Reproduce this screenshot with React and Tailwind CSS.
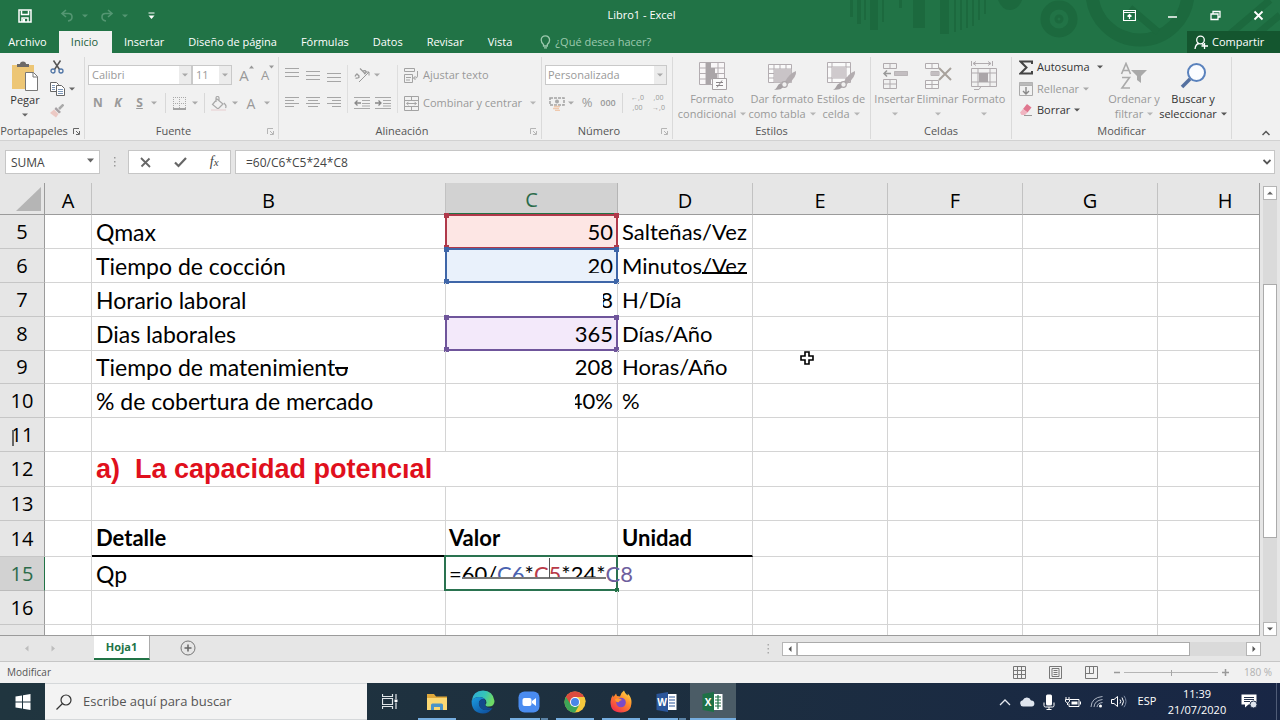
import React from "react";

const Caret = ({ className = "text-[#a9a9a9]" }) => (
  <svg width="6" height="4" viewBox="0 0 6 4" className={"shrink-0 " + className} aria-hidden="true">
    <path d="M0 0.500h6L3 3.500z" fill="currentColor" />
  </svg>
);

const Sep = () => <span className="h-5 w-px shrink-0 bg-[#d8d8d8]" />;

const Icon = ({ w = 16, h = 16, children, className = "" }) => (
  <svg width={w} height={h} viewBox={`0 0 ${w} ${h}`} fill="none" className={"shrink-0 " + className} aria-hidden="true">
    {children}
  </svg>
);

const Btn = ({ label, className = "", children }) => (
  <button type="button" aria-label={label} className={"flex shrink-0 items-center justify-center " + className}>
    {children}
  </button>
);

/* ---------- Title bar ---------- */

function TitleBar() {
  return (
    <header className="relative bg-[#217346] text-white">
      <svg className="absolute right-0 top-0" width="440" height="53" viewBox="0 0 440 53" aria-hidden="true">
        <g fill="#1c693e">
          <path d="M10 0h3v17h-3zM17 0h4v24h-4zM24 0h2v20h-2zM30 0h8v30h-8zM42 0h2v22h-2zM59 0h3v8h-3zM73 0h12v28h-12zM100 0h9v34h-9zM114 0h2v32h-2zM120 0h2v30h-2zM126 0h2v28h-2zM132 0h2v26h-2zM138 0h2v20h-2zM144 0h2v14h-2zM158 0h24q-4 10-12 10t-12-10z" />
        </g>
        <g fill="none" stroke="#1c693e">
          <circle cx="219" cy="19" r="14" strokeWidth="9" />
          <circle cx="219" cy="19" r="3" strokeWidth="3" />
          <circle cx="300" cy="-8" r="48" strokeWidth="13" />
          <path d="M290 8l28 24M390 34l40-34M410 40l30-25" strokeWidth="7" />
        </g>
      </svg>
      <div className="relative flex h-[31px] items-center">
        <div className="flex flex-1 items-center pl-[18px]">
          <Btn label="Guardar">
            <Icon w={14} h={14}>
              <path d="M1 1h12v12H1z" stroke="#fff" strokeWidth="1.500" />
              <path d="M3.500 1.500v4h7v-4M4 13V9h6v4" stroke="#fff" strokeWidth="1.500" />
              <path d="M5 10h2v3H5z" fill="#fff" />
            </Icon>
          </Btn>
          <Btn label="Deshacer" className="ml-7 gap-2 text-[#549672]">
            <Icon w={14} h={14}>
              <path d="M6 1L2 4.500 6 8M2 4.500h6.500q3.500 0 3.500 3.500t-4 4" stroke="currentColor" strokeWidth="1.600" />
            </Icon>
            <Caret className="text-[#549672]" />
          </Btn>
          <Btn label="Rehacer" className="ml-3 gap-2 text-[#549672]">
            <Icon w={14} h={14}>
              <path d="M8 1l4 3.500L8 8M12 4.500H5.500Q2 4.500 2 8t4 4" stroke="currentColor" strokeWidth="1.600" />
            </Icon>
            <Caret className="text-[#549672]" />
          </Btn>
          <Btn label="Personalizar barra" className="ml-5">
            <Icon w={7} h={8}>
              <path d="M0.500 1h6" stroke="#fff" />
              <path d="M0.500 3.500h6L3.500 7z" fill="#fff" />
            </Icon>
          </Btn>
        </div>
        <h1 className="text-[11px] font-normal">Libro1 - Excel</h1>
        <div className="flex flex-1 items-center justify-end gap-[30px] pr-[15px]">
          <Btn label="Opciones de la cinta">
            <Icon w={13} h={11}>
              <path d="M0.500 0.500h12v10h-12zM0.500 2.500h12" stroke="#fff" strokeWidth="1.200" />
              <path d="M6.500 9V4.500M4.500 6.500l2-2 2 2" stroke="#fff" strokeWidth="1.200" />
            </Icon>
          </Btn>
          <Btn label="Minimizar">
            <Icon w={13} h={11}><path d="M2 7h9" stroke="#fff" strokeWidth="1.500" /></Icon>
          </Btn>
          <Btn label="Restaurar">
            <Icon w={13} h={11}>
              <path d="M2 4h7v5.500H2zM4 4V1.500h7V7H9" stroke="#fff" strokeWidth="1.300" />
            </Icon>
          </Btn>
          <Btn label="Cerrar">
            <Icon w={13} h={11}><path d="M2.500 1.500l8 8M10.500 1.500l-8 8" stroke="#fff" strokeWidth="1.800" /></Icon>
          </Btn>
        </div>
      </div>
      <nav className="relative flex h-[22px] items-stretch text-[11px]">
        <button type="button" className="w-[59px] pr-1 text-center">Archivo</button>
        <button type="button" className="w-[53px] bg-[#f1f1f1] pr-0.5 text-center text-[#1e5e3c]">Inicio</button>
        {["Insertar", "Diseño de página", "Fórmulas", "Datos", "Revisar", "Vista"].map((t) => (
          <button key={t} type="button" className="px-3">{t}</button>
        ))}
        <button type="button" className="ml-4 flex items-center gap-1 text-[#9cc9ae]">
          <Icon w={11} h={14}>
            <path d="M3.500 9.500Q1.200 7.500 1.200 5a4.200 4.200 0 0 1 8.400 0q0 2.500-2.300 4.500v1.500h-3.800zM4 12.800h3" stroke="currentColor" strokeWidth="1.300" />
          </Icon>
          ¿Qué desea hacer?
        </button>
        <button type="button" className="ml-auto flex w-[93px] items-center gap-1 bg-[#14562f] pl-[7px]">
          <Icon w={14} h={15}>
            <circle cx="6.500" cy="5" r="3.800" stroke="#fff" strokeWidth="1.300" />
            <path d="M1 14q0.500-5 4-5.500M8 8.500l1.500 1.500M10.500 8v6M7.500 11h6.500" stroke="#fff" strokeWidth="1.300" />
          </Icon>
          Compartir
        </button>
      </nav>
    </header>
  );
}

/* ---------- Ribbon ---------- */

const Launcher = ({ dark }) => (
  <Btn label="Más opciones" className={"w-4 " + (dark ? "text-[#666]" : "text-[#b5b5b5]")}>
    <Icon w={7} h={7}>
      <path d="M0.500 6V0.500H6M3 3l3 3M6.500 3v3.500H3" stroke="currentColor" />
    </Icon>
  </Btn>
);

const Group = ({ title, className, launcher, dark, children }) => (
  <section className={"flex shrink-0 flex-col " + className}>
    <div className="mt-1 flex h-[82px] flex-col border-r border-[#dadada]">
      <div className="h-[67px]">{children}</div>
      <div className="flex h-4 items-center text-[11px] text-[#555]">
        <h2 className="flex-1 whitespace-nowrap text-center font-normal">{title}</h2>
        {launcher && <Launcher dark={dark} />}
      </div>
    </div>
  </section>
);

const BigBtn = ({ lines, icon, className = "", active }) => (
  <button
    type="button"
    className={"flex shrink-0 flex-col items-center text-[11px] leading-[14px] " + (active ? "text-[#333] " : "text-[#999] ") + className}
  >
    <span className="flex h-8 items-center justify-center">{icon}</span>
    <span className="whitespace-nowrap">{lines[0]}</span>
    <span className="flex h-[15px] items-center gap-1 whitespace-nowrap">
      {lines[1]}
      <Caret className={active ? "text-[#555]" : "text-[#b5b5b5]"} />
    </span>
  </button>
);

const Lines = ({ y, widths = [14, 14, 14], align = "l", gap = 4 }) => (
  <Icon w={14} h={14}>
    {widths.map((w, i) => {
      const x = align === "l" ? 0 : align === "c" ? (14 - w) / 2 : 14 - w;
      return <path key={i} d={`M${x} ${y + i * gap + 0.5}h${w}`} stroke="#a6a6a6" />;
    })}
  </Icon>
);

const Brush = () => (
  <g>
    <path d="M29 9q1 6-8 13l-3-2.500Q23 11 29 9z" fill="#b3adb0" />
    <circle cx="17.500" cy="22.500" r="2.800" fill="#f1f1f1" stroke="#aaa5a8" strokeWidth="1.200" />
    <path d="M14 21q-3 1-4 4-1 2-3 2.500 6 1 9-2z" fill="#a5a0a3" />
  </g>
);

function Ribbon() {
  return (
    <div className="flex h-[88px] shrink-0 items-start overflow-hidden border-b border-[#d2d2d2] bg-[#f1f1f1] text-[11px] text-[#999]">
      <Group title="Portapapeles" launcher dark className="w-[85px]">
        <div className="flex pt-0.5">
          <button type="button" className="flex w-[50px] flex-col items-center pt-0.5 text-[#333]">
            <Icon w={28} h={30}>
              <path d="M1 4h22v24H1z" fill="#edc675" />
              <path d="M6 6V3h3q0-2.500 3-2.500t3 2.500h3v3z" fill="#6d6a68" />
              <path d="M14.500 11.500h8l4 4v14h-12z" fill="#fff" stroke="#777" />
              <path d="M22 11.500V16h4.500" stroke="#777" />
            </Icon>
            <span className="flex h-[18px] items-center">Pegar</span>
            <Caret className="mt-1 text-[#666]" />
          </button>
          <div className="flex flex-col items-start gap-2 pt-px">
            <Btn label="Cortar" className="h-3.5 w-3.5">
              <Icon w={14} h={14}>
                <path d="M3.500 0.500l6 9M10.500 0.500l-6 9" stroke="#555" strokeWidth="1.500" />
                <circle cx="3" cy="11" r="2" stroke="#4f74a5" strokeWidth="1.300" />
                <circle cx="11" cy="11" r="2" stroke="#4f74a5" strokeWidth="1.300" />
              </Icon>
            </Btn>
            <Btn label="Copiar" className="h-3.5 gap-1">
              <Icon w={15} h={14}>
                <path d="M0.500 0.500h6l2 2v7h-8z" fill="#fff" stroke="#666" />
                <path d="M2 3.500h3M2 5.500h3M2 7.500h3" stroke="#7b95b5" />
                <path d="M6.500 3.500h5l3 3v7h-8z" fill="#fff" stroke="#666" />
                <path d="M8 7.500h5M8 9.500h5M8 11.500h5" stroke="#7b95b5" />
              </Icon>
              <Caret className="text-[#666]" />
            </Btn>
            <Btn label="Copiar formato" className="h-3.5 w-3.5">
              <Icon w={14} h={14}>
                <path d="M13.500 0.500L9 5" stroke="#aaa" strokeWidth="2.500" />
                <path d="M6 3l5 5-2 1.500L4.500 5z" fill="#a5a0a3" />
                <path d="M4 5.500L8.500 10 6 13.500 0 9z" fill="#ecc9c4" />
              </Icon>
            </Btn>
          </div>
        </div>
      </Group>

      <Group title="Fuente" launcher className="w-[194px]">
        <div className="flex flex-col gap-2 pl-[3px] pt-2">
          <div className="flex h-5 items-center">
            <div className="relative">
              <select aria-label="Fuente" className="h-5 w-[104px] appearance-none border border-[#c9c9c9] bg-white px-[3px]">
                <option>Calibri</option>
              </select>
              <span className="pointer-events-none absolute inset-y-px right-px flex w-3 items-center justify-center bg-[#ececec]"><Caret /></span>
            </div>
            <div className="relative">
              <select aria-label="Tamaño de fuente" className="h-5 w-10 appearance-none border border-[#c9c9c9] bg-white px-[3px]">
                <option>11</option>
              </select>
              <span className="pointer-events-none absolute inset-y-px right-px flex w-3 items-center justify-center bg-[#ececec]"><Caret /></span>
            </div>
            <Btn label="Aumentar tamaño" className="ml-1 w-[21px] text-[15px] leading-5">
              A<Icon w={5} h={4} className="self-start"><path d="M0 3.500h5L2.500 0.500z" fill="#999" /></Icon>
            </Btn>
            <Btn label="Disminuir tamaño" className="w-[21px] text-[13px] leading-5">
              A<Icon w={5} h={4} className="self-start"><path d="M0 0.500h5L2.500 3.500z" fill="#999" /></Icon>
            </Btn>
          </div>
          <div className="flex h-5 items-center text-[12px]">
            <Btn label="Negrita" className="w-5 font-bold">N</Btn>
            <Btn label="Cursiva" className="w-5 font-bold italic">K</Btn>
            <Btn label="Subrayado" className="w-[23px] font-bold underline">S</Btn>
            <Caret />
            <span className="w-2" /><Sep />
            <Btn label="Bordes" className="w-[26px]">
              <Icon w={13} h={13}>
                <path d="M0.500 0v12M12.500 0v12M6.500 0v12M0 0.500h13M0 6.500h13" stroke="#aaa" strokeDasharray="1 1" />
                <path d="M0 12h13" stroke="#888" strokeWidth="1.500" />
              </Icon>
            </Btn>
            <Caret /><span className="w-1.5" /><Sep />
            <Btn label="Color de relleno" className="w-[27px]">
              <Icon w={16} h={15}>
                <path d="M6 3l6 5-5 5-5.500-4.500zM5 6V2q0-1.500 1.500-1.500T8 2v2.500M13 7q3 3 1.500 5" stroke="#a9a9a9" strokeWidth="1.200" />
                <path d="M0 13h15v2H0z" fill="#ecdfe0" />
              </Icon>
            </Btn>
            <Caret />
            <Btn label="Color de fuente" className="w-[26px] text-[14px]">A</Btn>
            <Caret />
          </div>
        </div>
      </Group>

      <Group title="Alineación" launcher className="w-[263px]">
        <div className="flex h-[60px] gap-1.5 pl-1.5 pt-2">
          <div className="grid h-12 grid-cols-3 grid-rows-2 gap-x-[7px] gap-y-2">
            <Btn label="Superior"><Lines y={0} /></Btn>
            <Btn label="Medio"><Lines y={3} /></Btn>
            <Btn label="Inferior"><Lines y={5} /></Btn>
            <Btn label="Izquierda"><Lines y={1} widths={[14, 9, 14, 9]} gap={3} /></Btn>
            <Btn label="Centro"><Lines y={1} widths={[14, 10, 14, 10]} align="c" gap={3} /></Btn>
            <Btn label="Derecha"><Lines y={1} widths={[14, 9, 14, 9]} align="r" gap={3} /></Btn>
          </div>
          <span className="h-12 w-px bg-[#dedede]" />
          <div className="flex flex-col gap-2">
            <Btn label="Orientación" className="h-5 gap-1 self-start">
              <Icon w={16} h={16}>
                <path d="M2.500 6.500l3 3M1 9.500q1-2.500 2.500-2t1.500 3q-2 1-3.500.5M6 1.500l5.500 5.500M8.500 4q3-1 3.500 0.500t-2 2.500" stroke="#999" strokeWidth="1.200" />
                <path d="M5 15l10-10M11.500 5H15v3.500" stroke="#999" />
              </Icon>
              <Caret />
            </Btn>
            <div className="flex h-5 items-center gap-[5px]">
              <Btn label="Disminuir sangría">
                <Icon w={16} h={12}>
                  <path d="M0 0.500h16M8 3.500h8M8 6.500h8M0 11.500h16M8 9h8" stroke="#a9a9a9" />
                  <path d="M7 6H1M3.500 3.500L1 6l2.500 2.500" stroke="#888" strokeWidth="1.300" />
                </Icon>
              </Btn>
              <Btn label="Aumentar sangría">
                <Icon w={16} h={12}>
                  <path d="M0 0.500h16M8 3.500h8M8 6.500h8M0 11.500h16M8 9h8" stroke="#a9a9a9" />
                  <path d="M0 6h6M3.500 3.500L6 6 3.500 8.500" stroke="#888" strokeWidth="1.300" />
                </Icon>
              </Btn>
            </div>
          </div>
          <span className="h-12 w-px bg-[#dedede]" />
          <div className="flex flex-col items-start gap-2">
            <button type="button" className="flex h-5 items-center gap-1">
              <Icon w={15} h={15}>
                <path d="M0.500 0.500h10v3h-10zM0.500 6.500h8v8h-8zM2 9.500h5M2 12h4M13.500 3v5q0 2-2 2h-2M11.500 8l-2 2 2 2" stroke="#a3a3a3" />
              </Icon>
              Ajustar texto
            </button>
            <button type="button" className="flex h-5 items-center gap-1 whitespace-nowrap">
              <Icon w={15} h={15}>
                <path d="M0.500 0.500h14v14h-14zM0.500 4.500h14M0.500 10.500h14M7.500 0.500v4M7.500 10.500v4M2.500 7.500h10M4.500 5.800L2.800 7.500l1.700 1.700M10.500 5.800l1.700 1.700-1.700 1.700" stroke="#a3a3a3" />
              </Icon>
              Combinar y centrar
              <Caret className="ml-1 text-[#b5b5b5]" />
            </button>
          </div>
        </div>
      </Group>

      <Group title="Número" launcher className="w-[131px]">
        <div className="flex flex-col gap-2 pl-[3px] pt-2">
          <div className="relative h-5 w-[122px]">
            <select aria-label="Formato de número" className="h-5 w-full appearance-none border border-[#c9c9c9] bg-white px-[2px]">
              <option>Personalizada</option>
            </select>
            <span className="pointer-events-none absolute inset-y-px right-px flex w-3 items-center justify-center bg-[#ececec]"><Caret /></span>
          </div>
          <div className="flex h-5 items-center">
            <Btn label="Formato de contabilidad" className="w-[23px]">
              <Icon w={16} h={15}>
                <path d="M1 2h14v7H1z" stroke="#a3a3a3" strokeWidth="1.500" strokeDasharray="3 1" />
                <circle cx="8" cy="5.500" r="2" fill="#a9a9a9" />
                <path d="M5 10.500h6M4 12.500h6M6 14.500h5" stroke="#efc9ae" strokeWidth="1.500" />
              </Icon>
            </Btn>
            <Caret />
            <Btn label="Porcentaje" className="w-[26px] text-[13px]">%</Btn>
            <Btn label="Estilo millares" className="w-4 text-[9px] font-semibold">000</Btn>
            <span className="w-1.5" /><Sep />
            <Btn label="Aumentar decimales" className="ml-1 w-[21px] text-[7px] leading-[10px]"><span>←,0<br />,00</span></Btn>
            <Btn label="Disminuir decimales" className="w-[21px] text-[7px] leading-[10px]"><span>,00<br />→,0</span></Btn>
          </div>
        </div>
      </Group>

      <Group title="Estilos" className="w-[198px]">
        <div className="flex pl-1 pt-[3px]">
          <BigBtn className="w-[70px]" lines={["Formato", "condicional"]} icon={
            <Icon w={29} h={30}>
              <path d="M1.500 1.500h25v22h-25zM8 1.500v22M20 1.500v22M1.500 7h25M1.500 12.500h25M1.500 18h25" stroke="#b3adb1" fill="#f9f7f8" />
              <path d="M8 1.500h5v5.500H8zM8 7h9v5.500H8zM8 12.500h11V18H8zM8 18h5v5.500H8z" fill="#aaa5a8" />
              <path d="M14.500 17.500h14v11h-14z" fill="#fafafa" stroke="#a5a0a3" />
              <path d="M18 21.500h7M18 24.500h7M24 19.500l-5 7" stroke="#8a8588" />
            </Icon>} />
          <BigBtn className="w-[70px]" lines={["Dar formato", "como tabla"]} icon={
            <Icon w={30} h={28}>
              <path d="M1.500 2.500h23v18h-23zM7 2.500v18M13 2.500v18M19 2.500v18M1.500 7h23M1.500 11.500h23M1.500 16h23" stroke="#b3adb1" fill="#fafafa" />
              <path d="M7 7h17.500v13.500H7z" fill="#c9c4c7" /><Brush />
            </Icon>} />
          <BigBtn className="w-12" lines={["Estilos de", "celda"]} icon={
            <Icon w={30} h={28}>
              <path d="M1.500 0.500h23v20h-23zM6 0.500v20M20 0.500v20M1.500 5h23M1.500 16h23" stroke="#b3adb1" fill="#fafafa" />
              <path d="M6 5h14v11H6z" fill="#cfcacd" /><Brush />
            </Icon>} />
        </div>
      </Group>

      <Group title="Celdas" className="w-[141px]">
        <div className="flex pl-0.5 pt-[3px]">
          <BigBtn className="w-[43px]" lines={["Insertar", ""]} icon={
            <Icon w={26} h={28}>
              <path d="M1.500 1.500h13v5h-13zM8 1.500v5M1.500 17.500h13v9h-13zM8 17.500v9M1.500 22h13M12.500 9.500h13v4h-13z" stroke="#b0abae" />
              <path d="M12.500 9.500h13v4h-13z" fill="#c3bec1" />
              <path d="M9 11.500H2M5 8.500l-3 3 3 3" stroke="#999" strokeWidth="1.500" />
            </Icon>} />
          <BigBtn className="w-[43px]" lines={["Eliminar", ""]} icon={
            <Icon w={28} h={28}>
              <path d="M1.500 1.500h13v5h-13zM8 1.500v5M1.500 18.500h13v8h-13zM8 18.500v8M1.500 22.500h13M7 9.500h8v4H7z" stroke="#b0abae" fill="#f6f6f6" />
              <path d="M7 9.500h8v4H7z" fill="#c3bec1" />
              <path d="M15 6l12 12M27 6L15 18" stroke="#a8a29c" strokeWidth="2" />
            </Icon>} />
          <BigBtn className="w-[49px]" lines={["Formato", ""]} icon={
            <Icon w={28} h={30}>
              <path d="M1.500 0v5M22.500 0v5M3 2.500h18M6 0.500L3 2.500l3 2M18 0.500l3 2-3 2M1.500 7.500h25v18h-25zM8 7.500v18M20 7.500v18M1.500 12h25M1.500 21h25M4 28.500h5l2-3h6" stroke="#b0abae" />
              <path d="M9 12h9v9H9z" fill="#aaa5a8" />
            </Icon>} />
        </div>
      </Group>

      <Group title="Modificar" className="w-[220px]">
        <div className="flex pl-[7px]">
          <div className="flex w-[90px] flex-col pt-px text-[#333]">
            <button type="button" className="flex h-[18px] items-center gap-1">
              <Icon w={14} h={15}><path d="M13 4V1.500H1.500L7.500 7.500l-6 6H13V11" stroke="#444" strokeWidth="2" /></Icon>
              Autosuma
              <Caret className="ml-auto mr-1.5 text-[#555]" />
            </button>
            <button type="button" className="mt-0.5 flex h-[22px] items-center gap-1 text-[#999]">
              <Icon w={14} h={14}>
                <path d="M0.500 0.500h13v13H0.500zM0.500 3.500h13" stroke="#aaa" /><path d="M0.500 0.500h13v3H0.500z" fill="#bbb" />
                <path d="M7 5v7M4 9l3 3 3-3" stroke="#888" strokeWidth="1.400" />
              </Icon>
              Rellenar <Caret />
            </button>
            <button type="button" className="flex h-5 items-center gap-1">
              <Icon w={14} h={14}>
                <path d="M8 1l4.500 3.500-4 5L4 6z" fill="#e0778f" /><path d="M4 6l4.500 3.500L6 12H2.500L1 9.500z" fill="#f0b4c0" />
                <path d="M5 12.500h8" stroke="#999" />
              </Icon>
              Borrar <Caret className="text-[#555]" />
            </button>
          </div>
          <BigBtn className="mt-[3px] w-[50px]" lines={["Ordenar y", "filtrar"]} icon={
            <Icon w={28} h={28}>
              <path d="M1.500 12L6 1.500 10.500 12M3 8.500h6M2 15.500h7.500L2 26h8" stroke="#aaa" strokeWidth="1.600" />
              <path d="M11 8h16l-6 6v7l-4-3v-4z" fill="#a9a9a9" />
            </Icon>} />
          <BigBtn active className="mt-[3px] w-[68px]" lines={["Buscar y", "seleccionar"]} icon={
            <Icon w={28} h={28}>
              <circle cx="17.500" cy="10.500" r="8.500" stroke="#5a82bd" strokeWidth="2" fill="#fafcff" />
              <path d="M11 17l-8 8" stroke="#54709f" strokeWidth="3.500" />
            </Icon>} />
        </div>
      </Group>
      <Btn label="Contraer la cinta" className="ml-auto mr-2.5 mt-[74px] h-3 text-[#555]">
        <Icon w={8} h={6}><path d="M0.500 5L4 1.500 7.500 5" stroke="currentColor" strokeWidth="1.500" /></Icon>
      </Btn>
    </div>
  );
}

/* ---------- Formula bar ---------- */

function FormulaBar() {
  return (
    <div className="flex h-[42px] shrink-0 items-center bg-[#e6e6e6] px-[5px] text-[12px] text-[#444]">
      <div className="relative">
        <input aria-label="Cuadro de nombres" defaultValue="SUMA" className="block h-6 w-[95px] border border-[#c6c6c6] bg-white px-[5px]" />
        <Icon w={7} h={5} className="absolute right-1.5 top-2"><path d="M0 0.500h7L3.500 4.500z" fill="#666" /></Icon>
      </div>
      <Icon w={3} h={12} className="ml-[13px]"><path d="M1 1h1.500v1.500H1zM1 5h1.500v1.500H1zM1 9h1.500v1.500H1z" fill="#999" /></Icon>
      <div className="ml-3 flex h-6 w-[103px] items-center justify-around border border-[#c6c6c6] bg-white">
        <Btn label="Cancelar"><Icon w={11} h={11}><path d="M1 1l9 9M9.500 1.500L1.500 9.500" stroke="#666" strokeWidth="1.800" /></Icon></Btn>
        <Btn label="Introducir"><Icon w={13} h={11}><path d="M1 5.500L4.500 9 12 1" stroke="#666" strokeWidth="2.200" /></Icon></Btn>
        <Btn label="Insertar función" className="text-[14px] italic leading-5 [font-family:'Liberation_Serif',serif]">f<span className="text-[11px] leading-5">x</span></Btn>
      </div>
      <div className="ml-1 flex h-6 flex-1 items-center border border-[#c6c6c6] bg-white">
        <input aria-label="Barra de fórmulas" defaultValue="=60/C6*C5*24*C8" className="h-full min-w-0 flex-1 bg-transparent px-2.5 outline-none" />
        <Btn label="Expandir" className="px-[3px]"><Icon w={8} h={6}><path d="M0.500 1L4 4.500 7.500 1" stroke="#555" strokeWidth="1.800" /></Icon></Btn>
      </div>
    </div>
  );
}

/* ---------- Sheet ---------- */

const RangeBox = ({ color, fill }) => (
  <span className={"pointer-events-none absolute -bottom-px -left-px -right-px -top-px border-2 " + color + " " + fill}>
    <i className="absolute -left-[3px] -top-[3px] h-[5px] w-[5px] bg-current" />
    <i className="absolute -right-[3px] -top-[3px] h-[5px] w-[5px] bg-current" />
    <i className="absolute -bottom-[3px] -left-[3px] h-[5px] w-[5px] bg-current" />
    <i className="absolute -bottom-[3px] -right-[3px] h-[5px] w-[5px] bg-current" />
  </span>
);

const red = <RangeBox color="border-[#b0394a] text-[#b0394a]" fill="bg-[#fde6e4]" />;
const blue = <RangeBox color="border-[#3f66a8] text-[#3f66a8]" fill="bg-[#e9f1fb]" />;
const purple = <RangeBox color="border-[#6f559b] text-[#6f559b]" fill="bg-[#f3e9fa]" />;

const rows = [
  { n: 5, h: "h-[34px]", b: "Qmax", c: "50", d: "Salteñas/Vez", box: red },
  {
    n: 6, h: "h-[34px]", b: "Tiempo de cocción", box: blue,
    c: <span className="block h-8"><span className="block h-[23px] overflow-hidden">20</span></span>,
    d: <span className="flex h-8 items-start">Minutos<span className="block h-6 overflow-hidden border-b-2 border-black">/Vez</span></span>,
  },
  { n: 7, h: "h-[34px]", b: "Horario laboral", c: <span className="ml-auto flex w-2.5 justify-end overflow-hidden">8</span>, d: "H/Día" },
  { n: 8, h: "h-[34px]", b: "Dias laborales", c: "365", d: "Días/Año", box: purple },
  {
    n: 9, h: "h-[33px]", c: "208", d: "Horas/Año", cursor: true,
    b: <>Tiempo de matenimient<span className="relative">o<i className="absolute inset-x-0 top-1 h-3 border-b-2 border-black bg-white" /></span></>,
  },
  { n: 10, h: "h-[34px]", b: "% de cobertura de mercado", c: <span className="ml-auto flex w-[38px] justify-end overflow-hidden">40%</span>, d: "%" },
  { n: 11, h: "h-[34px]" },
  { n: 12, h: "h-[35px]", heading: true },
  { n: 13, h: "h-[34px]" },
  { n: 14, h: "h-9", b: "Detalle", c: "Valor", d: "Unidad", head: true },
  { n: 15, h: "h-[34px]", b: "Qp", formula: true },
  { n: 16, h: "h-[34px]" },
  { n: 17, h: "h-[34px]" },
];

const cell = "relative whitespace-nowrap border-b border-r border-[#d4d4d4] p-0";

function Row({ r }) {
  const strong = r.head ? " border-b-2 border-b-black font-bold" : "";
  return (
    <tr className={r.h}>
      <th scope="row" className={"relative border-b border-r p-0 text-center text-[20px] font-normal leading-8 " + (r.formula ? "border-b-[#bbb] border-r-[#217346] bg-[#d2d2d2] text-[#2b6b4a]" : "border-b-[#c6c6c6] border-r-[#9b9b9b] bg-[#e6e6e6]")}>
        {r.n}
        {r.n === 11 && <i className="absolute left-3 top-3 h-4 w-0.5 bg-[#666]" />}
      </th>
      <td className={cell} />
      {r.heading ? (
        <td colSpan={2} className={cell + " pl-1 text-[27px] font-bold leading-8 text-[#e0101c] [font-family:'Liberation_Sans',sans-serif]"}>
          <span className="whitespace-pre">a)  La capacidad potenc<span className="relative">i<i className="absolute inset-x-0 top-1 h-[6px] bg-white" /></span>al</span>
        </td>
      ) : (
        <td className={cell + " pl-1" + (r.head ? "" : " text-[23px]") + strong}>{r.b}</td>
      )}
      {r.formula ? (
        <td colSpan={2} className={cell}>
          <span className="pointer-events-none absolute -bottom-px -left-0.5 -top-0.5 w-[174px] border-2 border-[#2a7350]">
            <i className="absolute -bottom-[3px] -right-[3px] h-1 w-1 bg-[#217346]" />
          </span>
          <div className="relative flex h-8 items-start pl-[3px]">
            =<span className="block h-[21px] overflow-hidden border-b-2 border-[#777]">60/<span className="text-[#4a62b0]">C6</span>*<span className="text-[#b93a48]">C<i className="absolute top-0 h-5 w-px bg-[#555]" />5</span>*24*</span><span className="text-[#6e5f9e]">C8</span>
          </div>
        </td>
      ) : (
        <>
          {!r.heading && (
            <td className={cell + (r.head ? " pl-[3px]" : " pr-1 text-right") + strong}>
              {r.box}
              <div className="relative">{r.c}</div>
            </td>
          )}
          <td className={cell + " pl-1" + strong}>{r.d}</td>
        </>
      )}
      <td className={cell}>
        {r.cursor && (
          <svg className="absolute left-[47px] top-0" width="14" height="14" viewBox="0 0 14 14" aria-hidden="true">
            <path d="M5 1h4v4h4v4H9v4H5V9H1V5h4z" fill="#fff" stroke="#000" strokeWidth="1.600" />
          </svg>
        )}
      </td>
      <td className={cell} />
      <td className={cell} />
      <td className={cell} />
    </tr>
  );
}

function Sheet() {
  return (
    <main className="flex min-h-0 flex-1 bg-[#e6e6e6]">
      <div className="min-w-0 flex-1 overflow-hidden border-b border-r border-[#9b9b9b] bg-white">
        <table className="w-[1293px] table-fixed border-separate border-spacing-0 text-[22px] leading-[32px] text-black [font-family:Lato,sans-serif]">
          <colgroup>
            <col className="w-[45px]" /><col className="w-[47px]" /><col className="w-[354px]" /><col className="w-[172px]" />
            <col className="w-[135px]" /><col className="w-[135px]" /><col className="w-[135px]" /><col className="w-[135px]" /><col className="w-[135px]" />
          </colgroup>
          <thead>
            <tr className="h-8 text-[20px] [font-family:'Open_Sans',sans-serif]">
              <td className="border-b border-r border-[#9b9b9b] bg-[#e6e6e6] p-0">
                <svg width="25" height="24" viewBox="0 0 25 24" className="ml-auto mr-[3px] block" aria-hidden="true"><path d="M25 0v24H0z" fill="#b5b5b5" /></svg>
              </td>
              {["A", "B", "C", "D", "E", "F", "G", "H"].map((c) => (
                <th key={c} scope="col" className={"border-b border-r p-0 pt-1 text-center font-normal leading-[26px] " + (c === "C" ? "border-b-2 border-b-[#217346] border-r-[#b5b5b5] bg-[#d2d2d2] text-[#2b6b4a]" : "border-b-[#9b9b9b] border-r-[#c2c2c2] bg-[#e6e6e6]")}>{c}</th>
              ))}
            </tr>
          </thead>
          <tbody className="[&_th]:[font-family:'Open_Sans',sans-serif]">
            {rows.map((r) => <Row key={r.n} r={r} />)}
          </tbody>
        </table>
      </div>
      <div className="flex w-5 flex-col items-center pt-[3px]">
        <Btn label="Arriba" className="h-3.5 w-3.5 border border-[#b5b5b5] bg-white"><Icon w={6} h={4}><path d="M0 3.500h6L3 0.500z" fill="#666" /></Icon></Btn>
        <div className="flex w-3.5 flex-1 flex-col bg-[#dadada]">
          <span className="grow-[85]" />
          <span className="grow-[253] border border-[#ababab] bg-white" />
          <span className="grow-[85]" />
        </div>
        <Btn label="Abajo" className="h-3.5 w-3.5 border border-[#b5b5b5] bg-white"><Icon w={6} h={4}><path d="M0 0.500h6L3 3.500z" fill="#555" /></Icon></Btn>
      </div>
    </main>
  );
}

function SheetTabs() {
  return (
    <div className="flex h-[26px] shrink-0 items-start border-b border-[#c6c6c6] bg-[#e6e6e6] text-[11px]">
      <div className="flex h-6 w-[94px] items-center gap-[22px] pl-6">
        <Icon w={5} h={7}><path d="M4.500 0.500v6L1 3.500z" fill="#bdbdbd" /></Icon>
        <Icon w={5} h={7}><path d="M0.500 0.500v6L4 3.500z" fill="#bdbdbd" /></Icon>
      </div>
      <button type="button" className="h-6 w-14 border-b-2 border-r border-b-[#217346] border-r-[#ababab] bg-white font-bold text-[#217346]">Hoja1</button>
      <Btn label="Hoja nueva" className="ml-[30px] h-6">
        <Icon w={16} h={16}><circle cx="8" cy="8" r="7" stroke="#777" /><path d="M8 4.500v7M4.500 8h7" stroke="#666" strokeWidth="1.500" /></Icon>
      </Btn>
      <div className="ml-auto flex h-6 w-[513px] items-center pr-[19px] pt-0.5">
        <Icon w={3} h={12}><path d="M0.500 1H2v1.500H0.500zM0.500 5H2v1.500H0.500zM0.500 9H2v1.500H0.500z" fill="#aaa" /></Icon>
        <Btn label="Izquierda" className="ml-3 h-3.5 w-[15px] border border-[#b5b5b5] bg-white"><Icon w={4} h={6}><path d="M3.500 0v6L0.500 3z" fill="#555" /></Icon></Btn>
        <div className="flex h-3.5 flex-1 bg-[#dadada]">
          <span className="grow-[393] border border-[#ababab] bg-white" />
          <span className="grow-[56]" />
        </div>
        <Btn label="Derecha" className="h-3.5 w-[15px] border border-[#b5b5b5] bg-white"><Icon w={4} h={6}><path d="M0.500 0v6L3.500 3z" fill="#555" /></Icon></Btn>
      </div>
    </div>
  );
}

function StatusBar() {
  return (
    <div className="flex h-[21px] shrink-0 items-center bg-[#f1f1f1] pl-[7px] pr-2 text-[10px] text-[#555]">
      <span>Modificar</span>
      <div className="ml-auto flex items-center gap-[23px]">
        <Btn label="Normal"><Icon w={13} h={13}><path d="M0.500 0.500h12v12h-12zM4.500 0.500v12M8.500 0.500v12M0.500 4.500h12M0.500 8.500h12" stroke="#777" /></Icon></Btn>
        <Btn label="Diseño de página"><Icon w={13} h={13}><path d="M0.500 0.500h12v12h-12zM3 2.500h7v8H3zM4.500 4.500h4M4.500 6.500h4M4.500 8.500h4" stroke="#777" /></Icon></Btn>
        <Btn label="Salto de página"><Icon w={13} h={13}><path d="M0.500 0.500h12v12h-12zM4.500 0.500v7M8.500 0.500v7M0.500 7.500h8" stroke="#777" /></Icon></Btn>
      </div>
      <Btn label="Alejar" className="ml-4"><Icon w={6} h={7}><path d="M0 3.500h6" stroke="#999" strokeWidth="1.500" /></Icon></Btn>
      <div className="mx-1 flex w-[94px] items-center">
        <input type="range" aria-label="Zoom" min="0" max="200" defaultValue="100" className="h-px w-full appearance-none bg-[#b5b5b5] [&::-webkit-slider-thumb]:h-1.5 [&::-webkit-slider-thumb]:w-px [&::-webkit-slider-thumb]:appearance-none [&::-webkit-slider-thumb]:bg-[#a5a5a5]" />
      </div>
      <Btn label="Acercar"><Icon w={7} h={7}><path d="M0 3.500h7M3.500 0v7" stroke="#999" strokeWidth="1.500" /></Icon></Btn>
      <span className="w-[43px] text-right text-[#b0b0b0]">180 %</span>
    </div>
  );
}

/* ---------- Taskbar ---------- */

const Task = ({ label, run, stacked, active, children }) => (
  <button type="button" aria-label={label} className={"relative flex h-full w-[46px] shrink-0 items-center justify-center " + (active ? "bg-[#4b5c66]" : "")}>
    {children}
    {run && (
      <span className={"absolute bottom-0 flex h-0.5 " + (active ? "inset-x-0" : "inset-x-1")}>
        <span className="flex-1 bg-[#76aee0]" />
        {stacked && <span className="w-2 border-l border-[#22353f] bg-[#5b83a6]" />}
      </span>
    )}
  </button>
);

const Office = ({ color, letter, children }) => (
  <Icon w={22} h={20}>
    <path d="M10 2h10.500v16H10z" fill="#fff" />
    {children}
    <path d="M0.500 2L12 0v20L0.500 18z" fill={color} />
    <text x="6.200" y="14" fontSize="10" fontWeight="700" fill="#fff" textAnchor="middle" fontFamily="Open Sans">{letter}</text>
  </Icon>
);

function Taskbar() {
  return (
    <footer className="flex h-[37px] shrink-0 items-stretch bg-linear-to-r from-[#20353f] via-[#1d2f3f] to-[#182645] text-[11px] text-white">
      <Btn label="Inicio" className="w-[45px]">
        <Icon w={16} h={16}><path d="M0.500 2.500l6.500-1v6H0.500zM8 1.300L15.500 0v7.500H8zM0.500 8.500H7v6l-6.500-1zM8 8.500h7.500V16L8 14.800z" fill="#fff" /></Icon>
      </Btn>
      <label className="flex w-[322px] shrink-0 items-center gap-[11px] border-y border-[#d5d8da] bg-[#f3f3f3] pl-[11px]">
        <Icon w={16} h={16}><circle cx="10" cy="6" r="5" stroke="#333" strokeWidth="1.200" /><path d="M6.500 9.500L0.500 15.500" stroke="#333" strokeWidth="1.200" /></Icon>
        <input aria-label="Buscar" placeholder="Escribe aquí para buscar" className="min-w-0 flex-1 bg-transparent text-[13px] outline-none placeholder:text-[#555]" />
      </label>
      <Task label="Vista de tareas">
        <Icon w={16} h={15}><path d="M0.500 0v2.500h10V0M0.500 15v-2.500h10V15M0.500 4.500h10v6H0.500zM14 0v5M14 8.500V15" stroke="#dfe5e8" strokeWidth="1.200" /><path d="M12.500 5.500h3v2.500h-3z" fill="#fff" /></Icon>
      </Task>
      <span className="w-px shrink-0" />
      <Task label="Explorador" run>
        <Icon w={22} h={18}>
          <path d="M1 1h7l2 2.500h11V17H1z" fill="#e0a93b" /><path d="M1 5h20v12H1z" fill="#fbd873" />
          <path d="M5 17v-5q0-1.500 1.500-1.500h9q1.500 0 1.500 1.500v5h-3v-3H8v3z" fill="#4a93c8" />
        </Icon>
      </Task>
      <Task label="Edge">
        <Icon w={24} h={24}>
          <defs>
            <linearGradient id="eg" x1="0" y1="0" x2="1" y2="0.300"><stop offset="0" stopColor="#2fa8dc" /><stop offset="0.600" stopColor="#35c5b8" /><stop offset="1" stopColor="#6fd965" /></linearGradient>
            <linearGradient id="eb" x1="0" y1="0" x2="0.800" y2="1"><stop offset="0" stopColor="#1b9de2" /><stop offset="1" stopColor="#0e4f9e" /></linearGradient>
          </defs>
          <path d="M0.600 11Q2 0.500 12 0.500T23.500 11q0 5.500-6 5.500-3.500 0-3-2 1.500-2 .5-4Q13 7 8.500 7 3 7 .6 11z" fill="url(#eg)" />
          <path d="M0.600 11Q3 7 8.500 7q3.500 0 5 2-4-.5-5.500 3Q7 17 12 19.500q5 1.500 9.500-1.500Q18 23.500 12 23.500 0.500 23 .6 11z" fill="url(#eb)" />
          <path d="M13.500 9q-4-.5-5.500 3Q7 17 12 19.500q5 1.500 9.500-1.500-5 .5-7-2-1-1.500 0-3 .5-2-1-4z" fill="#12498c" />
        </Icon>
      </Task>
      <Task label="Zoom" run stacked>
        <Icon w={22} h={22}><rect x="0.500" y="0.500" width="21" height="21" rx="6" fill="#4a8cf0" /><rect x="4.500" y="7" width="9" height="8" rx="2" fill="#fff" /><path d="M14 10l4-3v8l-4-3z" fill="#fff" /></Icon>
      </Task>
      <Task label="Chrome" run>
        <Icon w={22} h={22}>
          <circle cx="11" cy="11" r="10.500" fill="#f6c83c" />
          <path d="M11 11l-9.100-5.250A10.500 10.500 0 0 0 11 21.500l4.500-8z" fill="#3da557" />
          <path d="M11 6h9.200q1.300 2.500 1.300 5H11z" fill="#f6c83c" />
          <path d="M1.900 5.750Q5 .5 11 .5t9.200 5.500H11L6.700 13.500z" fill="#dc4b3e" />
          <circle cx="11" cy="11" r="5" fill="#fff" /><circle cx="11" cy="11" r="4" fill="#4a86e8" />
        </Icon>
      </Task>
      <Task label="Firefox" run>
        <Icon w={22} h={23}>
          <defs><linearGradient id="ff" x1="0.900" y1="0" x2="0.200" y2="1"><stop offset="0" stopColor="#ffe14a" /><stop offset="0.450" stopColor="#ff8a2a" /><stop offset="1" stopColor="#f0294f" /></linearGradient></defs>
          <path d="M14 0.500q1 3 3.500 5 .5-1 .3-2Q21.500 7.500 21.500 12 21.500 22.500 11 22.500T0.500 12q0-4 2.500-7l.5 2L6 3.500 7 6l3 .5Q10.500 3 14 .5z" fill="url(#ff)" />
          <circle cx="11" cy="12.500" r="4.800" fill="#7b4bc8" /><path d="M5 9q4-2 7 1-3 .5-3 2-3 1-4-3z" fill="#ff9a2e" />
        </Icon>
      </Task>
      <Task label="Word" run stacked>
        <Office color="#2b569a" letter="W"><path d="M13 5h6M13 8h6M13 11h6M13 14h6" stroke="#2b569a" strokeWidth="1.200" /></Office>
      </Task>
      <Task label="Excel" run active>
        <Office color="#1e7145" letter="X"><path d="M13 5h6M13 8h6M13 11h6M13 14h6M16 3v14" stroke="#1e7145" strokeWidth="1.200" /></Office>
      </Task>
      <div className="ml-auto flex items-center">
        <Btn label="Iconos ocultos" className="w-[22px]"><Icon w={12} h={8}><path d="M1 7l5-5 5 5" stroke="#e5e8ee" strokeWidth="1.300" /></Icon></Btn>
        <Btn label="OneDrive" className="w-[22px]"><Icon w={16} h={11}><path d="M4 10.500a3.200 3.200 0 0 1-.3-6.300A4.500 4.500 0 0 1 12 4.500a3 3 0 0 1 .7 6z" fill="#dfe5ee" /></Icon></Btn>
        <Btn label="Micrófono" className="w-[22px]"><Icon w={12} h={16}><rect x="3" y="0.500" width="6" height="11" rx="1.500" fill="#fff" /><path d="M1 8.500v3q0 1.500 1.500 1.500h7q1.500 0 1.500-1.500v-3M6 13v2.500M3.500 15.500h5" stroke="#fff" /></Icon></Btn>
        <Btn label="Batería" className="w-[26px]"><Icon w={16} h={12}><path d="M5 3.500h9v7H4v-3M15.500 5.500v3M1 1v2.500M4 1v2.500M0.500 3.500h4v2l-2 1.500-2-1.500zM2.500 7v2" stroke="#fff" /><path d="M6.500 5.500h6v3h-6z" fill="#fff" /></Icon></Btn>
        <Btn label="Red" className="w-[22px]"><Icon w={14} h={13}><path d="M1 12Q1.500 2.500 12.500 1.500M4 12q.5-6.500 8.500-7.500M7 12q.5-4 5.500-4.500" stroke="#aeb6c4" /><circle cx="10.500" cy="11" r="1.500" fill="#fff" /></Icon></Btn>
        <Btn label="Volumen" className="w-[22px]"><Icon w={16} h={13}><path d="M0.500 4.500H3l3.500-3v10L3 8.500H0.500zM9 4.500q1.500 2 0 4M11 2.500q3 4 0 8" stroke="#fff" /><path d="M13 .8q4 5.700 0 11.400" stroke="#7d8aa3" /></Icon></Btn>
        <button type="button" className="w-[34px] text-center">ESP</button>
        <button type="button" className="w-[66px] text-center leading-4">11:39<br />21/07/2020</button>
        <Btn label="Notificaciones" className="w-[38px]"><Icon w={17} h={15}><path d="M0.500 0.500h15v10h-8L4 13.500v-3H0.500z" fill="#fff" /><path d="M3 3.500h10M3 5.500h10M3 7.500h6" stroke="#24324c" /><circle cx="12.500" cy="10.500" r="3.500" fill="#dfe5ee" stroke="#24324c" /></Icon></Btn>
        <span className="ml-2 mr-[3px] h-[37px] w-px bg-[#4f5c77]" />
      </div>
    </footer>
  );
}

export default function App() {
  return (
    <div className="flex h-screen flex-col overflow-hidden bg-[#e6e6e6] [font-family:'Open_Sans',sans-serif]">
      <TitleBar />
      <Ribbon />
      <FormulaBar />
      <Sheet />
      <SheetTabs />
      <StatusBar />
      <Taskbar />
    </div>
  );
}
